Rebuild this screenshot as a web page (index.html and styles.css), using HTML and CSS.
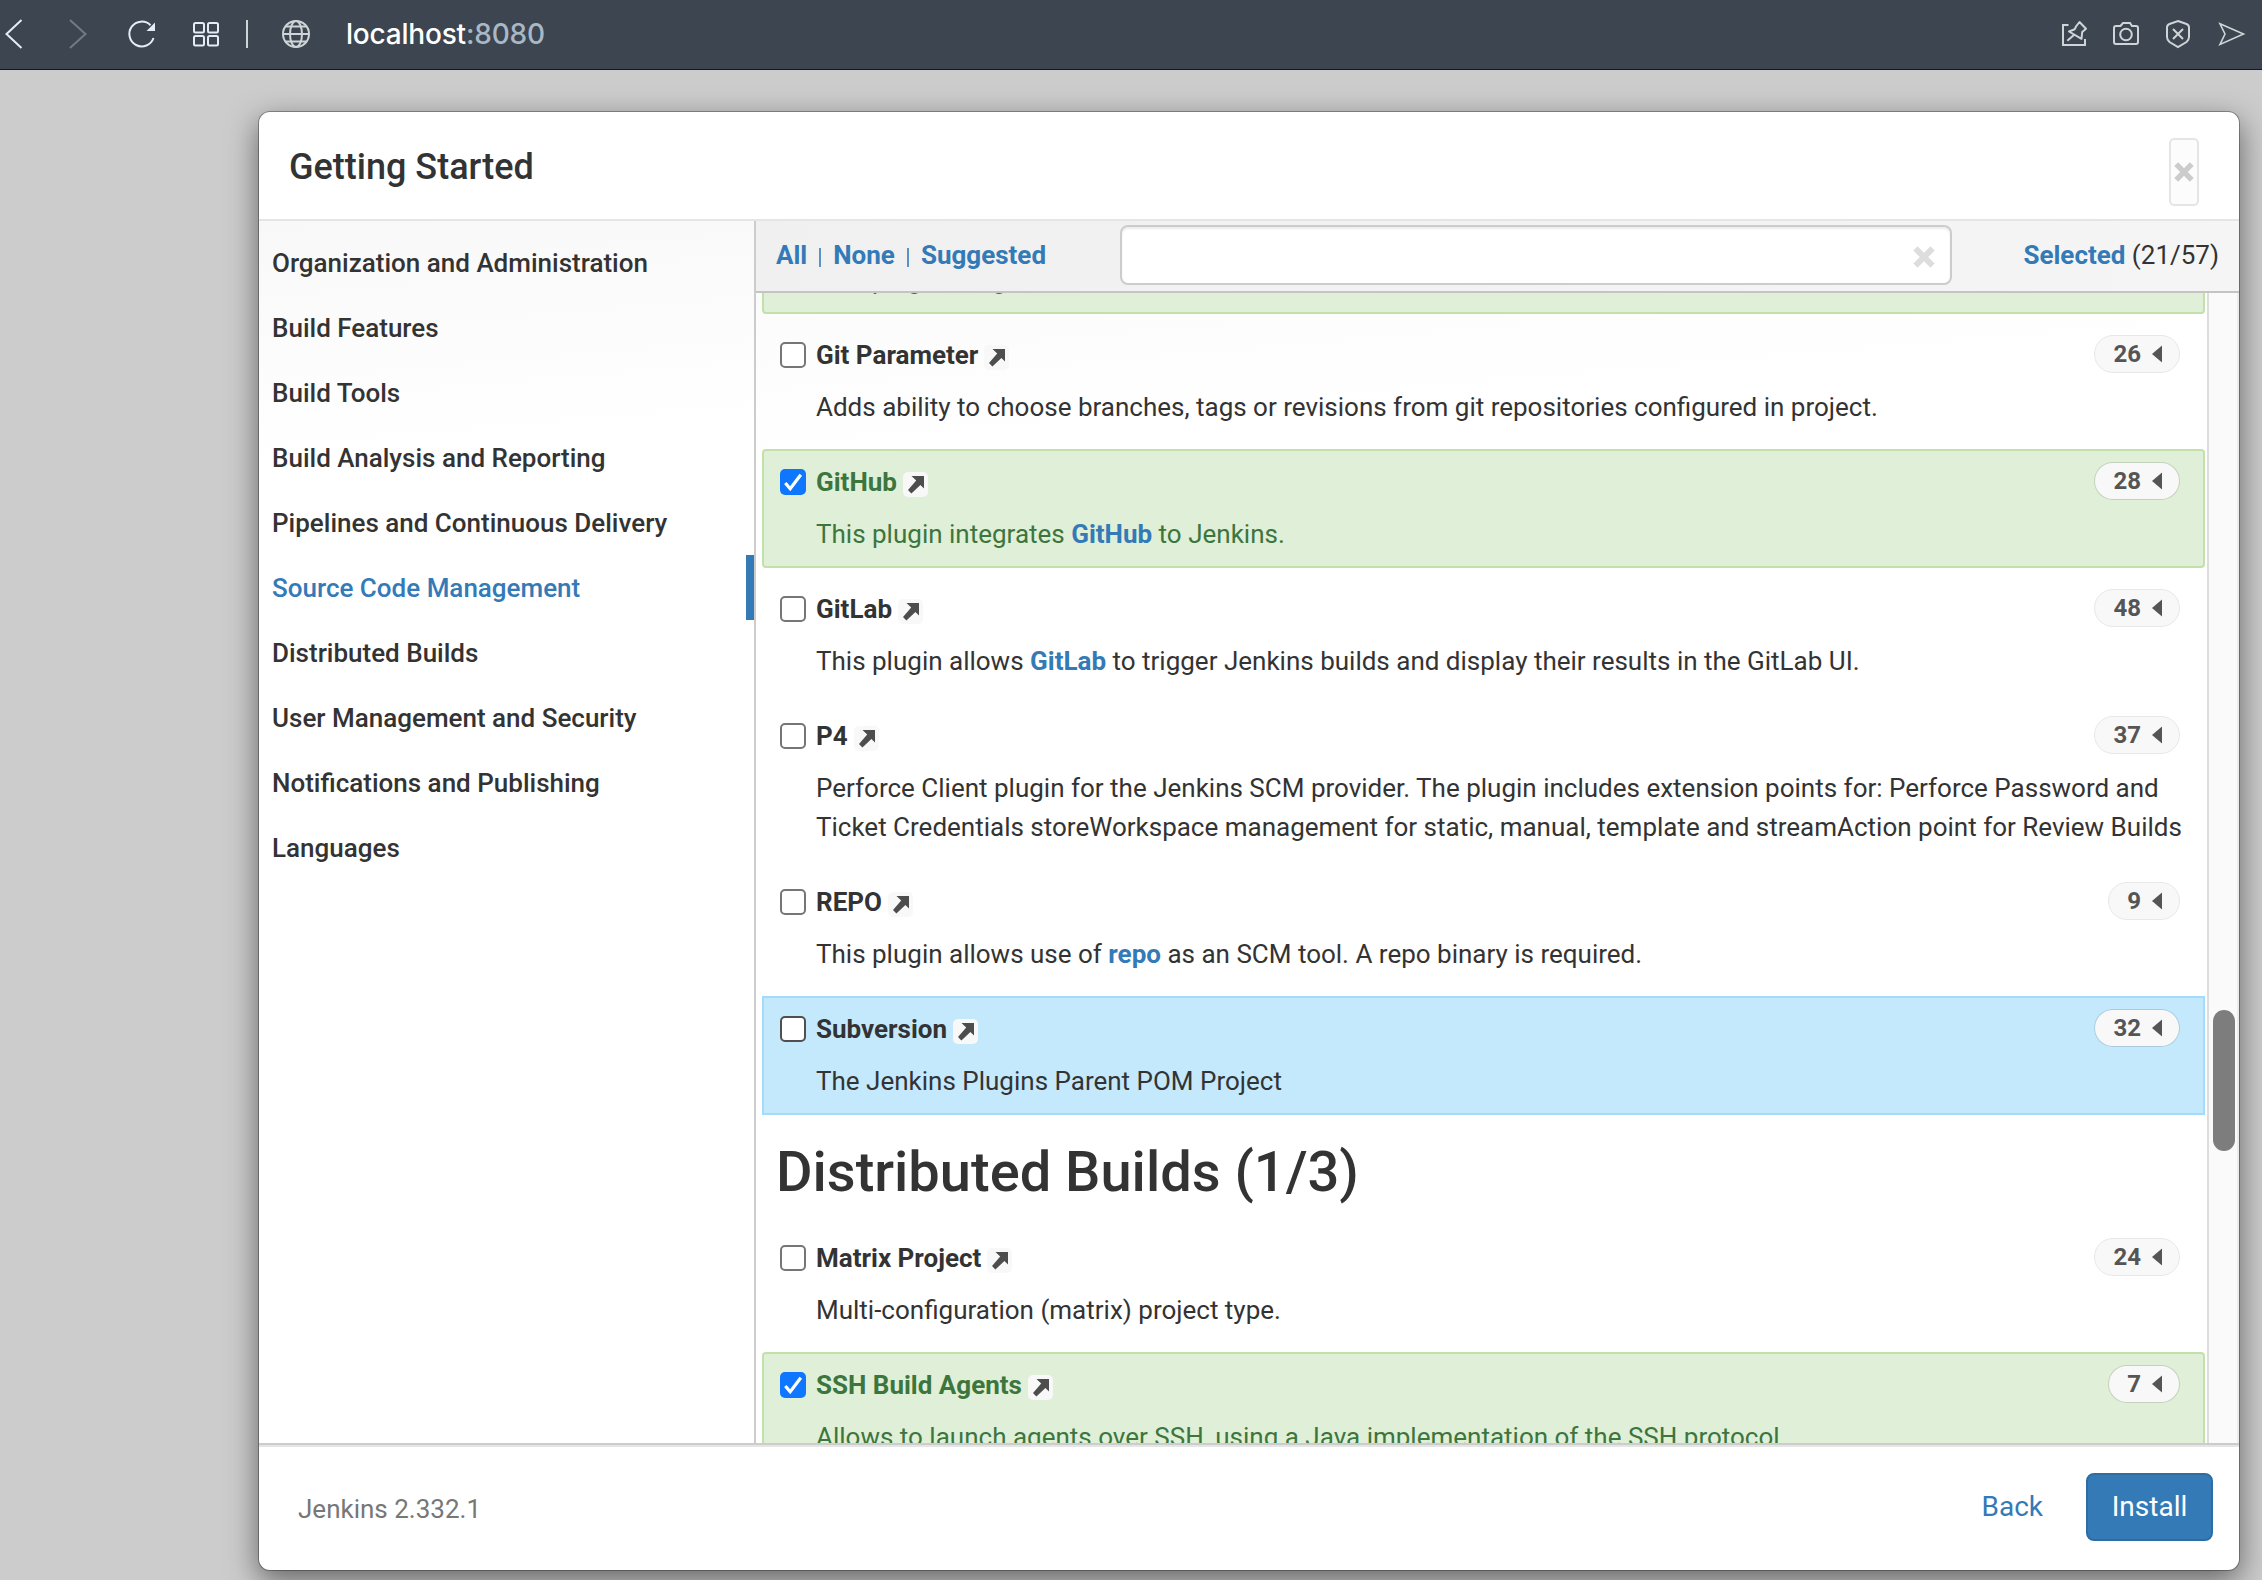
FILE: index.html
```html
<!DOCTYPE html>
<html lang="en">
<head>
<meta charset="utf-8">
<title>Getting Started - Jenkins</title>
<link rel="stylesheet" href="styles.css">
</head>
<body>
<svg class="defs" width="0" height="0">
  <symbol id="ext" viewBox="0 0 25 25"><path d="M8.5 4H21V16.5L17.4 12.9L8.4 21.4L5 18L13.2 8.4Z" fill="#4d4d4d"/></symbol>
  <symbol id="tri" viewBox="0 0 10 18"><path d="M10 0.5V17.5L0 9Z" fill="#555"/></symbol>
  <symbol id="cross" viewBox="0 0 20 20"><path d="M2.2 2.2L17.8 17.8M17.8 2.2L2.2 17.8" stroke="currentColor" stroke-width="5.4"/></symbol>
  <symbol id="tick" viewBox="0 0 26 26"><path d="M5.3 14L10.2 19.8L20.8 5.8" fill="none" stroke="#fff" stroke-width="3.2"/></symbol>
</svg>
<header class="browser">
  <svg class="nav-icons" viewBox="0 0 320 69" width="320" height="69" fill="none" stroke="#e3edf5" stroke-width="2">
    <path d="M21.5 20L6.5 34L21.5 48"/>
    <path d="M70 20L85.500 34L70 48" stroke="#727a83"/>
    <path d="M153.500 38A12.400 12.400 0 1 1 150.500 25.200"/>
    <path d="M155 22.500V31H146.500Z" fill="#e3edf5" stroke="none"/>
    <rect x="194" y="23" width="10" height="9.500" rx="1.500"/><rect x="208" y="23" width="10" height="9.500" rx="1.500"/>
    <rect x="194" y="36" width="10" height="9.500" rx="1.500"/><rect x="208" y="36" width="10" height="9.500" rx="1.500"/>
    <path d="M247 20V48" stroke="#cfd5d6"/>
    <g stroke="#cfd5d6"><circle cx="296" cy="34" r="13"/><ellipse cx="296" cy="34" rx="6" ry="13"/><path d="M283 34H309M285.500 26.500H306.500M285.500 41.500H306.500"/></g>
  </svg>
  <div class="url">localhost<span>:8080</span></div>
  <svg class="tool-icons" viewBox="2052 0 210 69" width="210" height="69" fill="none" stroke="#cfd5d6" stroke-width="2">
    <path d="M2068.500 25H2063V45H2085V39"/>
    <path d="M2067.300 40.700L2074.500 34.500M2079.500 22L2086 28.800L2082.200 32L2081.500 38.800L2069 31.500L2074.800 29.200L2076 26.500Z" stroke-linejoin="round"/>
    <path d="M2116 26H2120.500L2123 23H2130L2132 26H2136Q2138 26 2138 28V42Q2138 44 2136 44H2116Q2114 44 2114 42V28Q2114 26 2116 26Z"/><circle cx="2126" cy="34.500" r="5.800"/>
    <path d="M2178 21L2186.500 24Q2189 25 2189 27.500V37Q2189 40 2186.500 42L2178 47L2169.500 42Q2167 40 2167 37V27.500Q2167 25 2169.500 24Z"/><path d="M2173 29L2183 39M2183 29L2173 39"/>
    <path d="M2220 23.800L2243.500 34L2220 44.500L2225 34Z" stroke-width="1.600"/>
  </svg>
</header>
<main class="modal">
  <div class="modal-head">
    <h4>Getting Started</h4>
    <button class="close"><svg width="20" height="20"><use href="#cross"/></svg></button>
  </div>
  <div class="modal-body">
    <nav class="side">
      <a>Organization and Administration</a>
      <a>Build Features</a>
      <a>Build Tools</a>
      <a>Build Analysis and Reporting</a>
      <a>Pipelines and Continuous Delivery</a>
      <a class="active">Source Code Management</a>
      <a>Distributed Builds</a>
      <a>User Management and Security</a>
      <a>Notifications and Publishing</a>
      <a>Languages</a>
    </nav>
    <section class="content">
      <div class="filter">
        <div class="links"><b>All</b><i></i><b>None</b><i></i><b>Suggested</b></div>
        <div class="search"><svg width="22" height="22"><use href="#cross"/></svg></div>
        <div class="count"><b>Selected</b> (21/57)</div>
      </div>
      <div class="scroller">
        <div class="list">
          <article class="plugin on first">
            <p>This plugin integrates Git with Jenkins.</p>
          </article>
          <article class="plugin">
            <div class="title"><span class="box"></span><h5>Git Parameter</h5><span class="ext"><svg><use href="#ext"/></svg></span><span class="pill">26<svg><use href="#tri"/></svg></span></div>
            <p>Adds ability to choose branches, tags or revisions from git repositories configured in project.</p>
          </article>
          <article class="plugin on">
            <div class="title"><span class="box"><svg><use href="#tick"/></svg></span><h5>GitHub</h5><span class="ext"><svg><use href="#ext"/></svg></span><span class="pill">28<svg><use href="#tri"/></svg></span></div>
            <p>This plugin integrates <b>GitHub</b> to Jenkins.</p>
          </article>
          <article class="plugin">
            <div class="title"><span class="box"></span><h5>GitLab</h5><span class="ext"><svg><use href="#ext"/></svg></span><span class="pill">48<svg><use href="#tri"/></svg></span></div>
            <p>This plugin allows <b>GitLab</b> to trigger Jenkins builds and display their results in the GitLab UI.</p>
          </article>
          <article class="plugin">
            <div class="title"><span class="box"></span><h5>P4</h5><span class="ext"><svg><use href="#ext"/></svg></span><span class="pill">37<svg><use href="#tri"/></svg></span></div>
            <p>Perforce Client plugin for the Jenkins SCM provider. The plugin includes extension points for: Perforce Password and<br>Ticket Credentials storeWorkspace management for static, manual, template and streamAction point for Review Builds</p>
          </article>
          <article class="plugin">
            <div class="title"><span class="box"></span><h5>REPO</h5><span class="ext"><svg><use href="#ext"/></svg></span><span class="pill">9<svg><use href="#tri"/></svg></span></div>
            <p>This plugin allows use of <b>repo</b> as an SCM tool. A repo binary is required.</p>
          </article>
          <article class="plugin hover">
            <div class="title"><span class="box"></span><h5>Subversion</h5><span class="ext"><svg><use href="#ext"/></svg></span><span class="pill">32<svg><use href="#tri"/></svg></span></div>
            <p>The Jenkins Plugins Parent POM Project</p>
          </article>
          <h2>Distributed Builds (1/3)</h2>
          <article class="plugin">
            <div class="title"><span class="box"></span><h5>Matrix Project</h5><span class="ext"><svg><use href="#ext"/></svg></span><span class="pill">24<svg><use href="#tri"/></svg></span></div>
            <p>Multi-configuration (matrix) project type.</p>
          </article>
          <article class="plugin on">
            <div class="title"><span class="box"><svg><use href="#tick"/></svg></span><h5>SSH Build Agents</h5><span class="ext"><svg><use href="#ext"/></svg></span><span class="pill">7<svg><use href="#tri"/></svg></span></div>
            <p>Allows to launch agents over SSH, using a Java implementation of the SSH protocol.</p>
          </article>
        </div>
        <div class="track"><div class="thumb"></div></div>
      </div>
    </section>
  </div>
  <footer class="modal-foot">
    <span class="version">Jenkins 2.332.1</span>
    <a class="back">Back</a>
    <button class="install">Install</button>
  </footer>
</main>
</body>
</html>
```
FILE: styles.css
```css
* { box-sizing: border-box; }
body {
  margin: 0;
  height: 1580px;
  overflow: hidden;
  display: flex;
  flex-direction: column;
  background: #ccc;
  color: #333;
  font: 26px/39px Roboto, "Liberation Sans", sans-serif;
}
h2, h4, h5, p { margin: 0; font-weight: 500; }
svg { display: block; }
.defs { display: none; }

.browser {
  flex: none;
  height: 70px;
  display: flex;
  background: #3c4550;
  border-bottom: 1px solid #14181c;
  z-index: 1;
}
.url {
  flex: 1;
  padding-left: 26px;
  font: 500 28px/69px Inter, sans-serif;
  letter-spacing: -.2px;
  color: #fff;
}
.url span { color: #a9b8c6; }

.modal {
  width: 1982px;
  height: 1460px;
  margin: 41px 0 0 258px;
  display: flex;
  flex-direction: column;
  background: #fff;
  background-clip: padding-box;
  border: 1px solid rgba(0, 0, 0, .3);
  border-radius: 12px;
  box-shadow: 0 10px 30px rgba(0, 0, 0, .5);
  overflow: hidden;
}
.modal-head {
  flex: none;
  height: 109px;
  padding: 0 40px 0 30px;
  display: flex;
  justify-content: space-between;
  border-bottom: 2px solid #e5e5e5;
}
.modal-head h4 { font-size: 36px; line-height: 110px; }
.close {
  width: 30px;
  height: 68px;
  margin-top: 26px;
  padding: 0;
  display: grid;
  place-items: center;
  color: #ccc;
  background: #fcfcfc;
  border: 2px solid #e5e5e5;
  border-radius: 5px;
}

.modal-body {
  flex: 1;
  min-height: 0;
  display: flex;
  border-bottom: 2px solid #ccc;
}
.side {
  width: 497px;
  padding-top: 9px;
  border-right: 2px solid #ccc;
  background: linear-gradient(175deg, #f8f8f8, #fff 240px);
}
.side a {
  display: block;
  height: 65px;
  padding-left: 13px;
  font-weight: 500;
  line-height: 66px;
}
.side .active { color: #337ab7; border-right: 8px solid #337ab7; }

.content { flex: 1; min-width: 0; display: flex; flex-direction: column; }
.filter {
  flex: none;
  height: 72px;
  padding: 4px 20px 0;
  display: flex;
  justify-content: space-between;
  background: linear-gradient(100deg, #f0f0f0, #f5f5f5);
  border-bottom: 2px solid #c4c4c4;
  line-height: 60px;
}
.links { width: 344px; height: 60px; display: flex; align-items: center; }
.links i { width: 2px; height: 19px; margin: 4px 12px 0; background: #5a93c4; }
b { font-weight: 700; }
.links b, .count b, p b { color: #337ab7; }
.search {
  width: 832px;
  height: 60px;
  margin-right: auto;
  padding: 19px 15px;
  display: flex;
  justify-content: flex-end;
  color: #ddd;
  background: #fff;
  border: 2px solid #ccc;
  border-radius: 8px;
  box-shadow: inset 0 2px 2px rgba(0, 0, 0, .075);
}

.scroller {
  flex: 1;
  min-height: 0;
  display: flex;
  overflow: hidden;
  background: linear-gradient(175deg, #fbfbfb, #fff 170px);
}
.list { flex: 1; min-width: 0; padding: 0 2px 0 6px; }
.plugin {
  margin-bottom: 8px;
  padding: 8px 23px 12px 16px;
  border: 2px solid transparent;
  border-radius: 4px;
}
.plugin.first { margin-top: -52px; }
.on { color: #3c763d; background: #e0efd8; border-color: #c1e1a9; }
.hover { background: #c4e9fd; border-color: #a1dcfb; border-radius: 0; }
.title { height: 46px; display: flex; align-items: center; }
.title h5 { font-size: 26px; font-weight: 700; margin-left: 10px; }
.box {
  width: 26px;
  height: 26px;
  background: #fff;
  border: 2px solid #767676;
  border-radius: 5px;
}
.hover .box { border-color: #4f4f4f; }
.on .box { border: 0; background: #0f77ff; }
.box svg { width: 26px; height: 26px; }
.ext {
  width: 25px;
  height: 25px;
  margin: 4px 0 0 6px;
  background: #f8f8f8;
  border-radius: 5px;
}
.ext svg { width: 25px; height: 25px; }
.pill {
  height: 38px;
  margin: -2px 0 0 auto;
  padding: 0 17px 0 18px;
  display: flex;
  align-items: center;
  gap: 11px;
  color: #555;
  background: #f8f8f8;
  border: 1px solid #e8e8e8;
  border-radius: 19px;
  font-size: 24px;
  font-weight: 700;
}
.on .pill, .hover .pill { border-color: rgba(0, 0, 0, .12); background-clip: padding-box; }
.pill svg { width: 10px; height: 18px; }
.plugin p { padding: 10px 0 0 36px; font-weight: 400; white-space: nowrap; }
.list h2 { height: 102px; padding-left: 14px; font-size: 56px; line-height: 99px; }

.track {
  flex: none;
  width: 32px;
  background: #fafafa;
  border-left: 2px solid #ddd;
  border-right: 2px solid #ececec;
}
.thumb {
  width: 22px;
  height: 141px;
  margin: 717px 0 0 4px;
  background: #7d7d7d;
  border-radius: 11px;
}

.modal-foot {
  flex: none;
  height: 125px;
  padding: 0 26px 4px 39px;
  display: flex;
  align-items: center;
  border-top: 2px solid #e5e5e5;
}
.version { color: #777; flex: 1; padding-top: 6px; }
.back { color: #337ab7; font-size: 28px; margin-right: 43px; }
.install {
  width: 127px;
  height: 68px;
  padding: 0;
  color: #fff;
  background: #337ab7;
  border: 2px solid #2e6da4;
  border-radius: 8px;
  font: 28px Roboto, sans-serif;
}
```
